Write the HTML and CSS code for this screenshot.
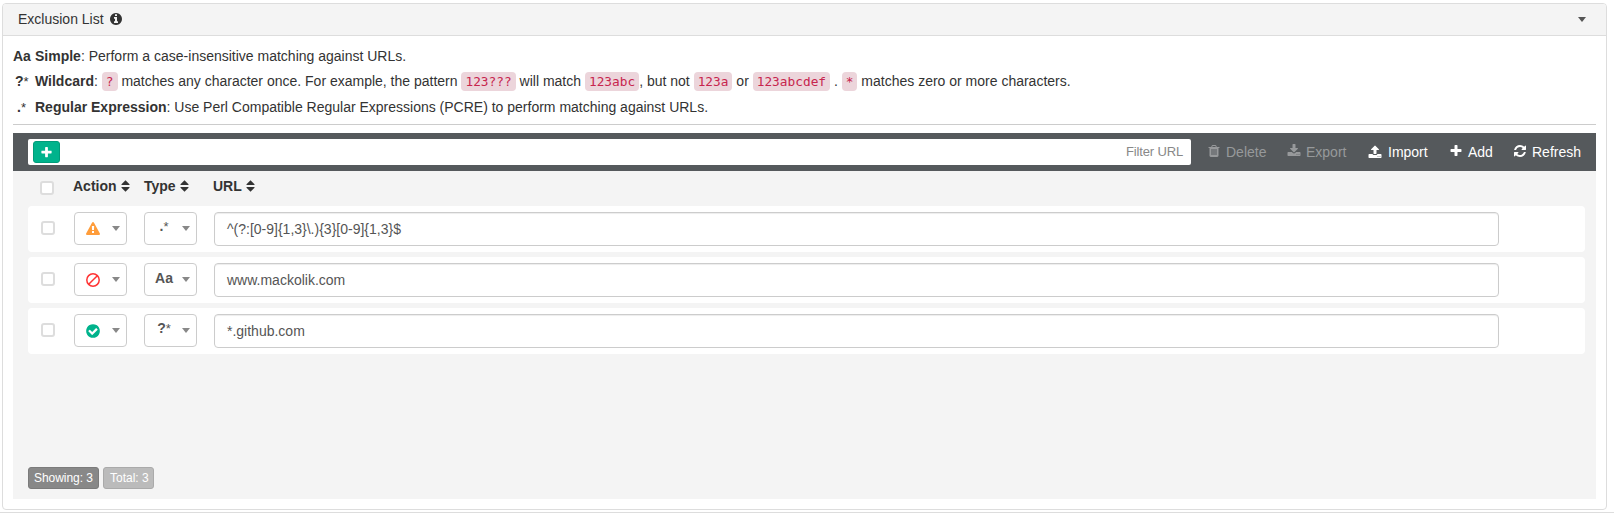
FILE: index.html
```html
<!DOCTYPE html>
<html lang="en">
<head>
<meta charset="utf-8">
<title>Exclusion List</title>
<link rel="stylesheet" href="styles.css">
</head>
<body>
<svg class="sprite" aria-hidden="true">
  <symbol id="info" viewBox="0 0 1792 1792"><path d="M1152 1376v-160q0-14-9-23t-23-9h-96v-512q0-14-9-23t-23-9h-320q-14 0-23 9t-9 23v160q0 14 9 23t23 9h96v320h-96q-14 0-23 9t-9 23v160q0 14 9 23t23 9h448q14 0 23-9t9-23zm-128-896v-160q0-14-9-23t-23-9h-192q-14 0-23 9t-9 23v160q0 14 9 23t23 9h192q14 0 23-9t9-23zm640 416q0 209-103 385.5t-279.5 279.5-385.5 103-385.5-103-279.5-279.5-103-385.5 103-385.5 279.5-279.5 385.5-103 385.5 103 279.5 279.5 103 385.5z"/></symbol>
  <symbol id="plus" viewBox="0 0 1792 1792"><path d="M1600 736v192q0 40-28 68t-68 28h-416v416q0 40-28 68t-68 28h-192q-40 0-68-28t-28-68v-416h-416q-40 0-68-28t-28-68v-192q0-40 28-68t68-28h416v-416q0-40 28-68t68-28h192q40 0 68 28t28 68v416h416q40 0 68 28t28 68z"/></symbol>
  <symbol id="refresh" viewBox="0 0 1792 1792"><path d="M1639 1056q0 5-1 7-64 268-268 434.5t-478 166.5q-146 0-282.5-55t-243.5-157l-129 129q-19 19-45 19t-45-19-19-45v-448q0-26 19-45t45-19h448q26 0 45 19t19 45-19 45l-137 137q71 66 161 102t187 36q134 0 250-65t186-179q11-17 53-117 8-23 30-23h192q13 0 22.500 9.500t9.500 22.500zm25-800v448q0 26-19 45t-45 19h-448q-26 0-45-19t-19-45 19-45l138-138q-148-137-349-137-134 0-250 65t-186 179q-11 17-53 117-8 23-30 23h-199q-13 0-22.500-9.500t-9.500-22.500v-7q65-268 270-434.500t480-166.500q146 0 284 55.500t245 156.500l130-129q19-19 45-19t45 19 19 45z"/></symbol>
  <symbol id="check" viewBox="0 0 1792 1792"><path d="M1412 734q0-28-18-46l-91-90q-19-19-45-19t-45 19l-408 407-226-226q-19-19-45-19t-45 19l-91 90q-18 18-18 46 0 27 18 45l362 362q19 19 45 19 27 0 46-19l543-543q18-18 18-45zm252 162q0 209-103 385.500t-279.500 279.500-385.500 103-385.500-103-279.500-279.500-103-385.500 103-385.500 279.500-279.500 385.500-103 385.500 103 279.500 279.500 103 385.500z"/></symbol>
  <symbol id="trash" viewBox="0 0 1792 1792"><path d="M704 1376v-704q0-14-9-23t-23-9h-64q-14 0-23 9t-9 23v704q0 14 9 23t23 9h64q14 0 23-9t9-23zm256 0v-704q0-14-9-23t-23-9h-64q-14 0-23 9t-9 23v704q0 14 9 23t23 9h64q14 0 23-9t9-23zm256 0v-704q0-14-9-23t-23-9h-64q-14 0-23 9t-9 23v704q0 14 9 23t23 9h64q14 0 23-9t9-23zm-544-992h448l-48-117q-7-9-17-11h-317q-10 2-17 11zm928 32v64q0 14-9 23t-23 9h-96v948q0 83-47 143.500t-113 60.500h-832q-66 0-113-58.500t-47-141.500v-952h-96q-14 0-23-9t-9-23v-64q0-14 9-23t23-9h309l70-167q15-37 54-63t79-26h320q40 0 79 26t54 63l70 167h309q14 0 23 9t9 23z"/></symbol>
  <symbol id="warning" viewBox="0 0 1792 1792"><path d="M1024 1375v-190q0-14-9.500-23.500t-22.500-9.500h-192q-13 0-22.500 9.500t-9.500 23.500v190q0 14 9.500 23.500t22.500 9.500h192q13 0 22.500-9.500t9.500-23.500zm-2-374l18-459q0-12-10-19-13-11-24-11h-220q-11 0-24 11-10 7-10 21l17 457q0 10 10 16.500t24 6.500h185q14 0 23.500-6.500t10.500-16.500zm-14-934l768 1408q35 63-2 126-17 29-46.500 46t-63.500 17h-1536q-34 0-63.500-17t-46.500-46q-37-63-2-126l768-1408q17-31 47-49t65-18 65 18 47 49z"/></symbol>
  <symbol id="download" viewBox="0 0 1792 1792"><path d="M1344 1344q0-26-19-45t-45-19-45 19-19 45 19 45 45 19 45-19 19-45zm256 0q0-26-19-45t-45-19-45 19-19 45 19 45 45 19 45-19 19-45zm128-224v320q0 40-28 68t-68 28h-1472q-40 0-68-28t-28-68v-320q0-40 28-68t68-28h465l135 136q58 56 136 56t136-56l136-136h464q40 0 68 28t28 68zm-325-569q17 41-14 70l-448 448q-18 19-45 19t-45-19l-448-448q-31-29-14-70 17-39 59-39h256v-448q0-26 19-45t45-19h256q26 0 45 19t19 45v448h256q42 0 59 39z"/></symbol>
  <symbol id="upload" viewBox="0 0 1792 1792"><path d="M1344 1472q0-26-19-45t-45-19-45 19-19 45 19 45 45 19 45-19 19-45zm256 0q0-26-19-45t-45-19-45 19-19 45 19 45 45 19 45-19 19-45zm128-224v320q0 40-28 68t-68 28h-1472q-40 0-68-28t-28-68v-320q0-40 28-68t68-28h427q21 56 70.500 92t110.500 36h256q61 0 110.500-36t70.500-92h427q40 0 68 28t28 68zm-325-648q-17 40-59 40h-256v448q0 26-19 45t-45 19h-256q-26 0-45-19t-19-45v-448h-256q-42 0-59-40-17-39 14-69l448-448q18-19 45-19t45 19l448 448q31 30 14 69z"/></symbol>
  <symbol id="ban" viewBox="0 0 14 14"><circle cx="7" cy="7" r="6.200" fill="none" stroke="currentColor" stroke-width="1.500"/><path d="M2.700 11.300L11.300 2.700" stroke="currentColor" stroke-width="1.500"/></symbol>
  <symbol id="sort" viewBox="0 0 9 12"><path d="M4.500 .3L8.500 4.300Q8.800 5 8.200 5H.8Q.2 5 .5 4.300ZM4.500 11.700L.5 7.700Q.2 7 .8 7H8.200Q8.800 7 8.500 7.700Z"/></symbol>
  <symbol id="caret" viewBox="0 0 8 5"><path d="M0 0H8L4 5Z"/></symbol>
</svg>

<section class="card">
  <header class="card-head">
    <span>Exclusion List</span>
    <svg class="icon info"><use href="#info"/></svg>
    <svg class="caret"><use href="#caret"/></svg>
  </header>
  <div class="card-body">
    <div class="help">
      <p class="help-row"><b class="sym">Aa</b><span><b>Simple</b>: Perform a case-insensitive matching against URLs.</span></p>
      <p class="help-row wild"><b class="sym mid">?<i>*</i></b><span><b>Wildcard</b>: <code>?</code> matches any character once. For example, the pattern <code>123???</code> will match <code>123abc</code>, but not <code>123a</code> or <code>123abcdef</code> . <code>*</code> matches zero or more characters.</span></p>
      <p class="help-row"><b class="sym dot">.<i>*</i></b><span><b>Regular Expression</b>: Use Perl Compatible Regular Expressions (PCRE) to perform matching against URLs.</span></p>
    </div>
    <div class="grid">
      <div class="toolbar">
        <div class="filter">
          <span class="add-btn"><svg class="icon"><use href="#plus"/></svg></span>
          <span class="placeholder">Filter URL</span>
        </div>
        <div class="tool delete off"><svg class="icon"><use href="#trash"/></svg>Delete</div>
        <div class="tool export off"><svg class="icon"><use href="#download"/></svg>Export</div>
        <div class="tool import"><svg class="icon"><use href="#upload"/></svg>Import</div>
        <div class="tool add"><svg class="icon"><use href="#plus"/></svg>Add</div>
        <div class="tool"><svg class="icon"><use href="#refresh"/></svg>Refresh</div>
      </div>
      <div class="columns">
        <span class="check"></span>
        <span class="col action">Action<svg class="sort"><use href="#sort"/></svg></span>
        <span class="col type">Type<svg class="sort"><use href="#sort"/></svg></span>
        <span class="col">URL<svg class="sort"><use href="#sort"/></svg></span>
      </div>
      <div class="rows">
        <div class="row">
          <span class="check"></span>
          <div class="select"><svg class="icon warn"><use href="#warning"/></svg><svg class="caret"><use href="#caret"/></svg></div>
          <div class="select"><b class="kind">.<i>*</i></b><svg class="caret"><use href="#caret"/></svg></div>
          <div class="url">^(?:[0-9]{1,3}\.){3}[0-9]{1,3}$</div>
        </div>
        <div class="row">
          <span class="check"></span>
          <div class="select"><svg class="icon deny"><use href="#ban"/></svg><svg class="caret"><use href="#caret"/></svg></div>
          <div class="select"><b class="kind">Aa</b><svg class="caret"><use href="#caret"/></svg></div>
          <div class="url">www.mackolik.com</div>
        </div>
        <div class="row">
          <span class="check"></span>
          <div class="select"><svg class="icon allow"><use href="#check"/></svg><svg class="caret"><use href="#caret"/></svg></div>
          <div class="select"><b class="kind">?<i>*</i></b><svg class="caret"><use href="#caret"/></svg></div>
          <div class="url">*.github.com</div>
        </div>
      </div>
      <div class="counts">
        <span class="badge showing">Showing: 3</span>
        <span class="badge total">Total: 3</span>
      </div>
    </div>
  </div>
</section>
<hr class="rule">
</body>
</html>
```
FILE: styles.css
```css
* { box-sizing: border-box; }
body {
  margin: 0;
  padding-top: 3px;
  background: #fff;
  color: #333;
  font: 14px/20px "Liberation Sans", Arial, sans-serif;
}
.sprite { display: none; }
svg { display: block; flex: none; fill: currentColor; }
.icon { width: 14px; height: 14px; }
.caret { width: 8px; height: 5px; }

.card {
  width: 1605px;
  height: 507px;
  margin-left: 2px;
  border: 1px solid #ddd;
  border-radius: 4px;
  overflow: hidden;
}
.card-head {
  display: flex;
  align-items: center;
  height: 32px;
  padding: 0 20px 1px 15px;
  background: #f4f4f4;
  border-bottom: 1px solid #ddd;
}
.info { margin-left: 5px; }
.card-head .caret { margin-left: auto; color: #555; }
.card-body { padding: 0 10px; }

.help {
  height: 89px;
  padding-top: 10px;
  border-bottom: 1px solid #ccc;
}
.help-row { display: flex; height: 25px; margin: 0; line-height: 20px; white-space: nowrap; }
.help-row.wild { height: 26px; }
.sym { width: 22px; }
.sym.mid { padding-left: 2px; }
.sym.dot { padding-left: 4px; }
b i { font-size: 13px; font-style: normal; font-weight: normal; }
code {
  padding: 2px 4px;
  border-radius: 4px;
  background: #ecd5db;
  color: #c7254e;
  font: 12.8px/15px "DejaVu Sans Mono", monospace;
}

.grid {
  display: flex;
  flex-direction: column;
  height: 366px;
  margin-top: 8px;
  background: #f4f4f4;
}
.toolbar {
  display: flex;
  align-items: center;
  height: 38px;
  padding-left: 15px;
  background: #55595c;
  color: #fff;
}
.filter {
  display: flex;
  align-items: center;
  justify-content: space-between;
  width: 1163px;
  height: 26px;
  margin-right: 16px;
  padding: 0 8px 0 5px;
  border-radius: 2px;
  background: #fff;
}
.add-btn {
  display: flex;
  align-items: center;
  justify-content: center;
  width: 27px;
  height: 22px;
  border: 1px solid #009c7a;
  border-radius: 3px;
  background: #00b38c;
}
.add-btn .icon { width: 13px; height: 13px; }
.placeholder { color: #888; font-size: 13px; letter-spacing: -.15px; }
.tool { display: flex; align-items: center; gap: 5px; }
.tool .icon { margin-bottom: 2px; }
.off { color: #97999b; }
.delete { width: 80px; }
.export { width: 81px; }
.import { width: 81px; gap: 6px; margin-bottom: 1px; }
.import .icon { margin-bottom: 0; }
.add { width: 64px; }

.columns { display: flex; height: 35px; padding: 5px 0 0 27px; font-weight: bold; }
.check {
  width: 14px;
  height: 14px;
  border: 2px solid #ddd;
  border-radius: 3px;
  background: #fff;
}
.columns .check { margin: 5px 19px 0 0; }
.col { display: flex; height: 20px; }
.action { width: 71px; }
.type { width: 69px; }
.sort { width: 9px; height: 12px; margin: 4px 0 0 4px; }

.rows { display: flex; flex-direction: column; gap: 5px; padding: 0 11px 0 15px; }
.row {
  display: flex;
  height: 46px;
  padding: 6px 0 0 13px;
  border-radius: 4px;
  background: #fff;
}
.row .check { margin: 9px 19px 0 0; }
.select {
  display: flex;
  align-items: center;
  justify-content: space-between;
  width: 53px;
  height: 33px;
  margin-right: 17px;
  padding: 0 6px 0 11px;
  border: 1px solid #ccc;
  border-radius: 4px;
  color: #555;
}
.select .caret { color: #888; }
.kind { width: 18px; margin: 0 0 4px -1px; text-align: center; }
.warn { color: #ff9d3b; }
.deny { color: #f33; }
.allow { width: 16px; height: 16px; margin-left: -1px; color: #00b38c; }
.url {
  width: 1285px;
  height: 34px;
  padding: 6px 12px;
  border: 1px solid #ccc;
  border-radius: 4px;
  box-shadow: inset 0 1px 1px rgba(0, 0, 0, .075);
  color: #555;
}

.counts { display: flex; gap: 4px; margin: auto 0 10px 15px; }
.badge {
  height: 22px;
  padding: 0 5px;
  border: 1px solid #7b7b7b;
  border-radius: 3px;
  background: #888;
  color: #fff;
  font-size: 12px;
  line-height: 20px;
  white-space: nowrap;
}
.showing { width: 71px; letter-spacing: -.05px; }
.total { width: 51px; padding-left: 6px; border-color: #aaa; background: #bbb; }
.rule { height: 1px; margin: 2px 0 0; border: 0; background: #ddd; }
```
